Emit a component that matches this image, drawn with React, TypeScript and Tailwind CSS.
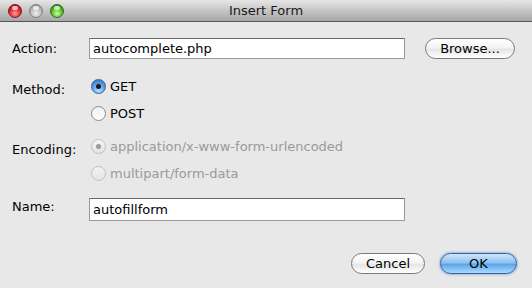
import React from 'react';

const font = { fontFamily: '"DejaVu Sans", "Liberation Sans", sans-serif' };

const Light = ({ color }: { color: 'red' | 'gray' | 'green' }) => {
  const cls =
    color === 'red'
      ? 'bg-[radial-gradient(circle_at_50%_70%,#ff9a9a_0%,#e0202a_55%,#8a0c10_100%)] border-[#7a1a1a]'
      : color === 'green'
      ? 'bg-[radial-gradient(circle_at_50%_70%,#c8ff9a_0%,#4fb51e_55%,#2a6a0c_100%)] border-[#2f6a1a]'
      : 'bg-[radial-gradient(circle_at_50%_70%,#f0f0f0_0%,#b8b8b8_55%,#7a7a7a_100%)] border-[#808080]';
  return (
    <div className={`relative w-[14px] h-[14px] rounded-full border ${cls}`}>
      <div className="absolute left-[3px] top-[1px] w-[6px] h-[4px] rounded-full bg-white/70" />
    </div>
  );
};

const Radio = ({ checked, disabled }: { checked?: boolean; disabled?: boolean }) => {
  if (checked && !disabled) {
    return (
      <div className="w-[15px] h-[15px] rounded-full border border-[#3a5f94] bg-[radial-gradient(circle_at_50%_80%,#b8e0ff_0%,#5aa2e8_50%,#2e6cc0_100%)] flex items-center justify-center">
        <div className="w-[5px] h-[5px] rounded-full bg-[#1a1a1a]" />
      </div>
    );
  }
  return (
    <div
      className={`w-[15px] h-[15px] rounded-full border flex items-center justify-center ${
        disabled
          ? 'border-[#c0c0c0] bg-gradient-to-b from-[#f4f4f4] to-[#e4e4e4]'
          : 'border-[#8a8a8a] bg-gradient-to-b from-[#f0f0f0] to-white'
      }`}
    >
      {checked && <div className="w-[5px] h-[5px] rounded-full bg-[#9a9a9a]" />}
    </div>
  );
};

const Pill = ({ children, primary, className }: { children: React.ReactNode; primary?: boolean; className?: string }) => (
  <div
    className={`h-[21px] rounded-full border flex items-center justify-center text-[13px] text-black ${
      primary
        ? 'border-[#3b5f96] bg-[linear-gradient(#cfe6fb_0%,#8ec2f0_45%,#5ea5e8_55%,#a8dcff_100%)] shadow-[0_0_3px_#4a8ad8]'
        : 'border-[#7a7a7a] bg-[linear-gradient(#ffffff_0%,#f4f4f4_45%,#e6e6e6_55%,#ffffff_100%)]'
    } ${className ?? ''}`}
  >
    {children}
  </div>
);

export default function App() {
  return (
    <div className="w-[532px] h-[288px] bg-[#e8e8e8] flex flex-col overflow-hidden" style={font}>
      {/* title bar */}
      <div className="relative h-[22px] shrink-0 bg-gradient-to-b from-[#e6e6e6] to-[#a6a6a6] border-b border-[#565656] flex items-center">
        <div className="flex items-center gap-[7px] pl-[8px]">
          <Light color="red" />
          <Light color="gray" />
          <Light color="green" />
        </div>
        <div className="absolute inset-0 flex items-center justify-center text-[13px] text-[#1a1a1a]">Insert Form</div>
      </div>

      <div className="flex flex-col pl-[12px] pt-[16px] text-[13px] text-black">
        {/* Action */}
        <div className="flex items-center h-[21px]">
          <div className="w-[77px]">Action:</div>
          <div className="w-[316px] h-[21px] bg-white border border-[#9a9a9a] border-t-[#6a6a6a] flex items-center pl-[3px]">
            autocomplete.php
          </div>
          <Pill className="ml-[20px] w-[90px]">Browse...</Pill>
        </div>

        {/* Method */}
        <div className="flex mt-[20px]">
          <div className="w-[79px] pt-[1px]">Method:</div>
          <div className="flex flex-col gap-[12px]">
            <div className="flex items-center gap-[4px] h-[15px]">
              <Radio checked />
              <span>GET</span>
            </div>
            <div className="flex items-center gap-[4px] h-[15px]">
              <Radio />
              <span>POST</span>
            </div>
          </div>
        </div>

        {/* Encoding */}
        <div className="flex mt-[18px]">
          <div className="w-[79px] pt-[1px]">Encoding:</div>
          <div className="flex flex-col gap-[12px] text-[#9a9a9a]">
            <div className="flex items-center gap-[4px] h-[15px]">
              <Radio checked disabled />
              <span>application/x-www-form-urlencoded</span>
            </div>
            <div className="flex items-center gap-[4px] h-[15px]">
              <Radio disabled />
              <span>multipart/form-data</span>
            </div>
          </div>
        </div>

        {/* Name */}
        <div className="flex items-start mt-[17px]">
          <div className="w-[77px] -mt-[1px]">Name:</div>
          <div className="w-[316px] h-[23px] bg-white border border-[#9a9a9a] border-t-[#6a6a6a] flex items-center pl-[3px]">
            autofillform
          </div>
        </div>

        {/* buttons */}
        <div className="flex justify-end gap-[15px] mt-[32px] pr-[15px]">
          <Pill className="w-[74px]">Cancel</Pill>
          <Pill primary className="w-[77px]">OK</Pill>
        </div>
      </div>
    </div>
  );
}
